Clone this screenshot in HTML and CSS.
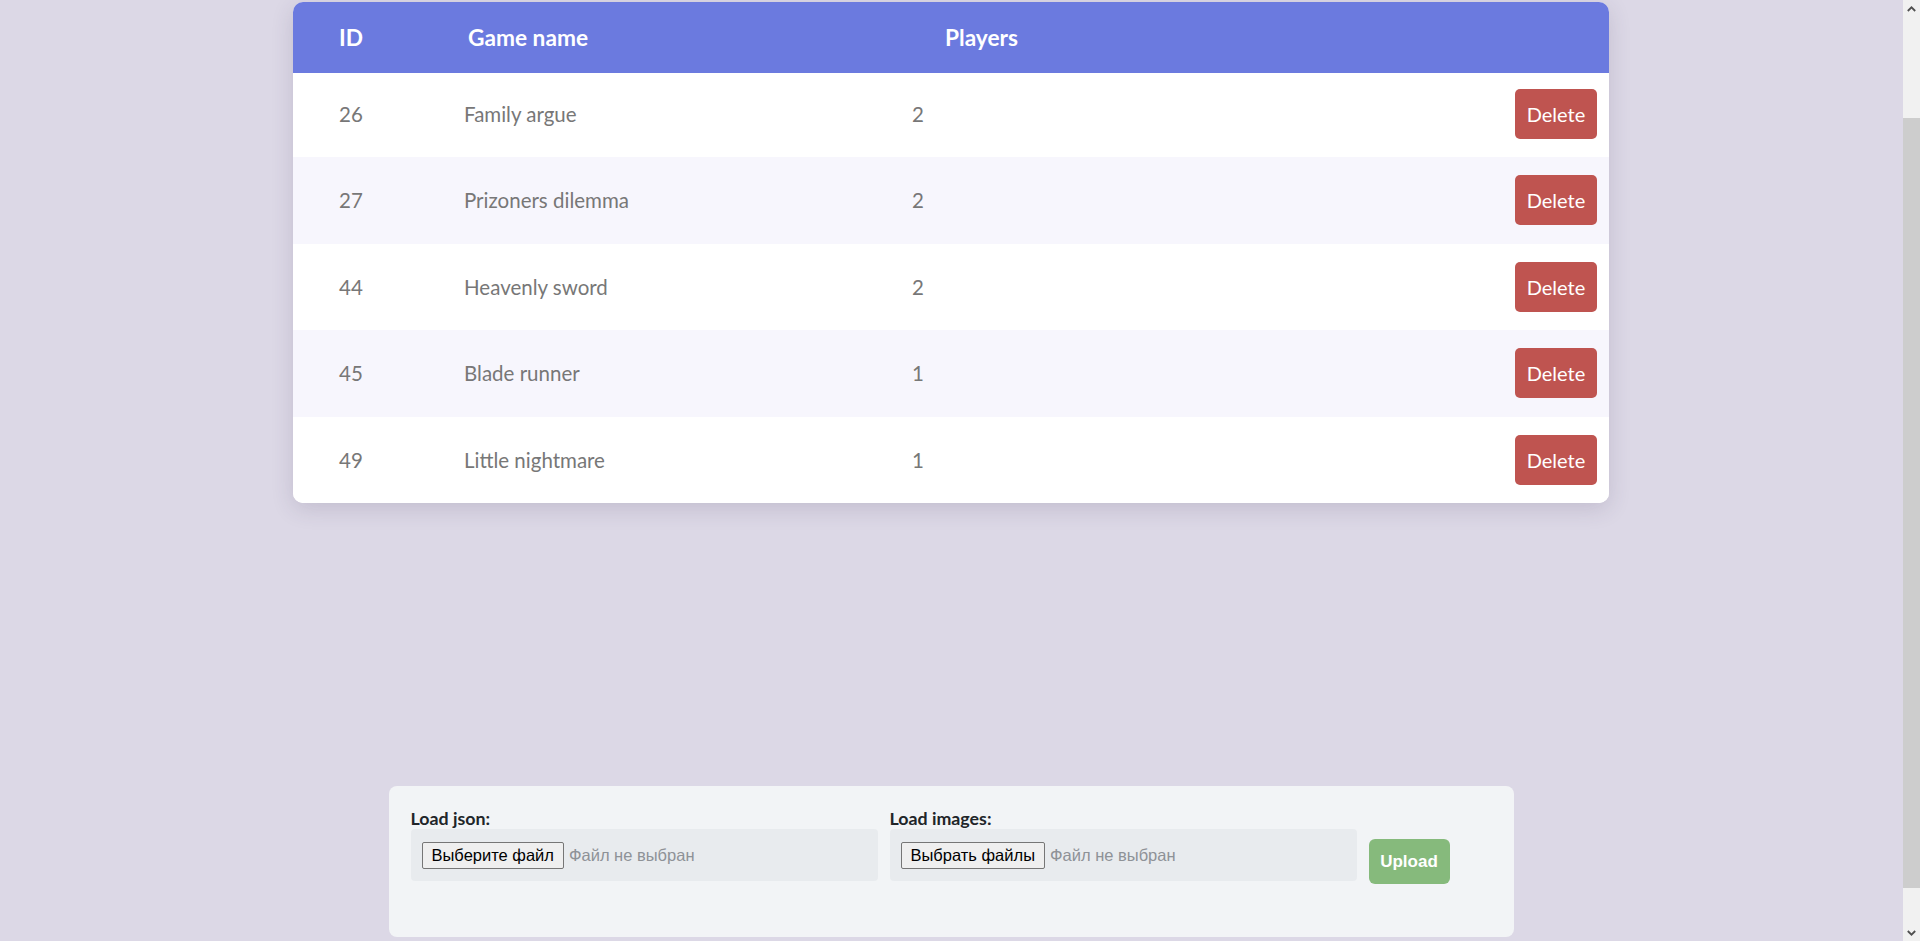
FILE: index.html
```html
<!DOCTYPE html>
<html lang="ru">
<head>
<meta charset="utf-8">
<title>Games</title>
<link rel="stylesheet" href="styles.css">
</head>
<body>
<div class="page">
  <div class="card">
    <div class="thead">
      <div class="th">ID</div>
      <div class="th">Game name</div>
      <div class="th">Players</div>
    </div>
    <div class="row row-first">
      <div class="td">26</div>
      <div class="td">Family argue</div>
      <div class="td">2</div>
      <button class="btn-delete">Delete</button>
    </div>
    <div class="row">
      <div class="td">27</div>
      <div class="td">Prizoners dilemma</div>
      <div class="td">2</div>
      <button class="btn-delete">Delete</button>
    </div>
    <div class="row">
      <div class="td">44</div>
      <div class="td">Heavenly sword</div>
      <div class="td">2</div>
      <button class="btn-delete">Delete</button>
    </div>
    <div class="row">
      <div class="td">45</div>
      <div class="td">Blade runner</div>
      <div class="td">1</div>
      <button class="btn-delete">Delete</button>
    </div>
    <div class="row">
      <div class="td">49</div>
      <div class="td">Little nightmare</div>
      <div class="td">1</div>
      <button class="btn-delete">Delete</button>
    </div>
  </div>

  <form class="upload-panel">
    <div class="group">
      <label class="group-label">Load json:</label>
      <div class="file-box">
        <span class="file-btn">Выберите файл</span>
        <span class="file-text">Файл не выбран</span>
      </div>
    </div>
    <div class="group">
      <label class="group-label">Load images:</label>
      <div class="file-box">
        <span class="file-btn">Выбрать файлы</span>
        <span class="file-text">Файл не выбран</span>
      </div>
    </div>
    <button type="button" class="btn-upload">Upload</button>
  </form>
</div>
<div class="scrollbar">
  <div class="sb-arrow">
    <svg width="9" height="6" viewBox="0 0 9 6"><path d="M0.8 5 L4.5 1.3 L8.2 5" fill="none" stroke="#505050" stroke-width="1.8"/></svg>
  </div>
  <div class="sb-track">
    <div class="sb-thumb"></div>
  </div>
  <div class="sb-arrow">
    <svg width="9" height="6" viewBox="0 0 9 6"><path d="M0.8 1 L4.5 4.7 L8.2 1" fill="none" stroke="#505050" stroke-width="1.8"/></svg>
  </div>
</div>
</body>
</html>
```

FILE: styles.css
```css
html, body {
  margin: 0;
  padding: 0;
  height: 100%;
}

body {
  display: flex;
  height: 941px;
  overflow: hidden;
  background: #dcd8e6;
  font-family: Lato, "Noto Sans", sans-serif;
}

.page {
  flex: 1;
  display: flex;
  flex-direction: column;
  align-items: center;
  padding-top: 2px;
  padding-right: 1px;
  background: #dcd8e6;
}

.card {
  width: 1316px;
  border-radius: 10px;
  overflow: hidden;
  background: #ffffff;
  box-shadow: 0 6px 22px rgba(60, 50, 90, 0.16);
}

.thead {
  height: 71px;
  display: grid;
  grid-template-columns: 129px 477px 1fr;
  align-items: center;
  padding-left: 46px;
  background: #6b7adf;
}

.th {
  color: #ffffff;
  font-weight: 700;
  font-size: 22.7px;
}

.row {
  height: 86.5px;
  box-sizing: border-box;
  display: grid;
  grid-template-columns: 125px 448px 1fr auto;
  align-items: center;
  padding-left: 46px;
  padding-right: 12px;
  background: #ffffff;
}

.row-first {
  height: 84px;
  padding-bottom: 2px;
}

.row:nth-child(odd) {
  background: #f7f6fd;
}

.td {
  color: #777777;
  font-size: 20.5px;
}

.btn-delete {
  width: 82px;
  height: 50px;
  border: none;
  border-radius: 5px;
  background: #bf5450;
  color: #ffffff;
  font-family: Lato, "Noto Sans", sans-serif;
  font-size: 20px;
  padding: 0;
}

.upload-panel {
  margin: 283px 0 0 0;
  width: 1125px;
  box-sizing: border-box;
  height: 151px;
  padding: 22px 22px 0 22px;
  background: #f2f4f6;
  border-radius: 8px;
  display: flex;
  align-items: flex-start;
  gap: 12px;
}

.group {
  width: 467px;
  display: flex;
  flex-direction: column;
}

.group-label {
  font-family: Lato, "Noto Sans", sans-serif;
  font-weight: 700;
  font-size: 17.8px;
  line-height: 21px;
  color: #212529;
}

.file-box {
  height: 52px;
  display: flex;
  align-items: center;
  padding: 0 11px;
  background: #e8ebee;
  border-radius: 4px;
}

.file-btn {
  height: 27px;
  box-sizing: border-box;
  display: flex;
  align-items: center;
  padding: 0 9px;
  border: 1px solid #767676;
  border-radius: 2px;
  background: #efefef;
  color: #000000;
  font-family: "Liberation Sans", Arial, sans-serif;
  font-size: 16.5px;
}

.file-text {
  margin-left: 5px;
  color: #8e9297;
  font-family: "Liberation Sans", Arial, sans-serif;
  font-size: 16.5px;
}

.btn-upload {
  margin-top: 31px;
  width: 81px;
  height: 45px;
  border: none;
  border-radius: 6px;
  background: #86ba7c;
  color: #ffffff;
  font-family: "Liberation Sans", Arial, sans-serif;
  font-weight: 700;
  font-size: 17px;
  padding: 0;
}

.scrollbar {
  width: 17px;
  display: flex;
  flex-direction: column;
  background: #f1f1f1;
}

.sb-arrow {
  height: 17px;
  display: flex;
  align-items: center;
  justify-content: center;
}

.sb-track {
  flex: 1;
  display: flex;
  flex-direction: column;
}

.sb-thumb {
  margin-top: 101px;
  height: 770px;
  background: #cdcdcd;
}
```
